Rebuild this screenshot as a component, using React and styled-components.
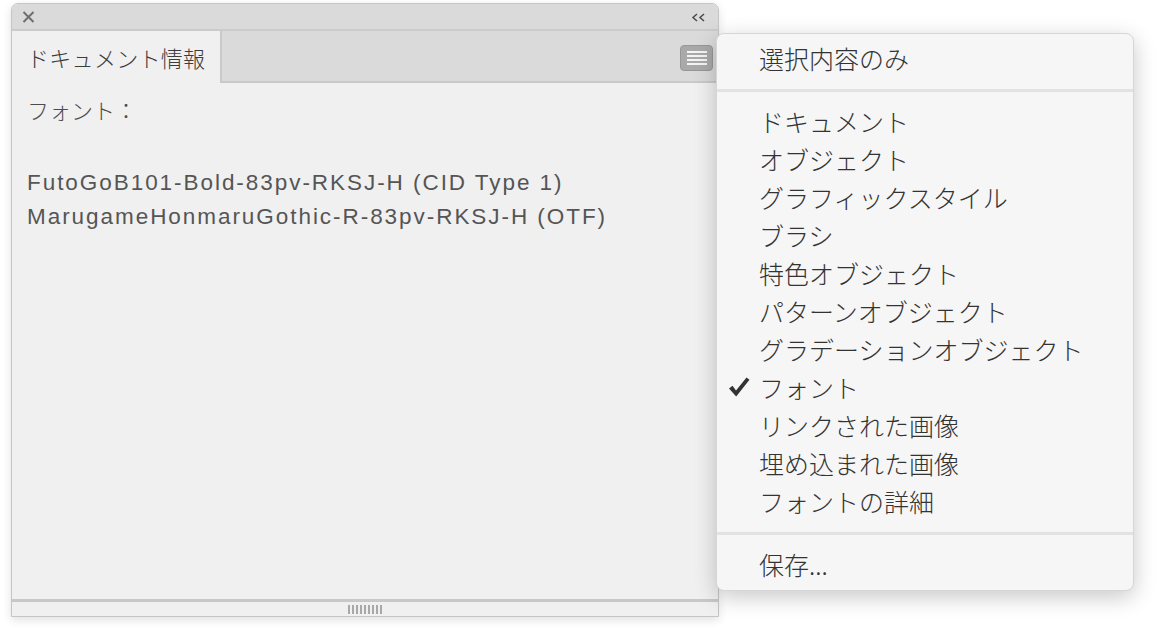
import React from 'react';
import styled, { createGlobalStyle } from 'styled-components';

const GlobalStyle = createGlobalStyle`
  html, body {
    margin: 0;
    padding: 0;
    background: #ffffff;
  }
  body {
    font-family: "Noto Sans CJK JP", "Noto Sans", sans-serif;
  }
`;

const menuItems = [
  { group: 'top', items: ['選択内容のみ'] },
  {
    group: 'types',
    items: [
      'ドキュメント',
      'オブジェクト',
      'グラフィックスタイル',
      'ブラシ',
      '特色オブジェクト',
      'パターンオブジェクト',
      'グラデーションオブジェクト',
      'フォント',
      'リンクされた画像',
      '埋め込まれた画像',
      'フォントの詳細',
    ],
  },
  { group: 'save', items: ['保存...'] },
];

const fonts = [
  'FutoGoB101-Bold-83pv-RKSJ-H (CID Type 1)',
  'MarugameHonmaruGothic-R-83pv-RKSJ-H (OTF)',
];

const App = () => {
  return (
    <>
      <GlobalStyle />
      <Stage>
        <Panel>
          <TitleBar>
            <IconButton aria-label="close">
              <svg width="13" height="12" viewBox="0 0 13 12">
                <path d="M1.5 1 L11.5 11 M11.5 1 L1.5 11" stroke="#6e6e6e" strokeWidth="2" fill="none" />
              </svg>
            </IconButton>
            <IconButton aria-label="collapse">
              <svg width="15" height="9" viewBox="0 0 15 9">
                <path d="M6 1 L2 4.5 L6 8 M13 1 L9 4.5 L13 8" stroke="#4a4a4a" strokeWidth="1.5" fill="none" />
              </svg>
            </IconButton>
          </TitleBar>

          <TabRow>
            <Tab>ドキュメント情報</Tab>
            <TabFiller>
              <MenuButton aria-label="panel menu">
                <span />
                <span />
                <span />
                <span />
              </MenuButton>
            </TabFiller>
          </TabRow>

          <Content>
            <Heading>フォント：</Heading>
            <Spacer />
            {fonts.map((f) => (
              <Line key={f}>{f}</Line>
            ))}
          </Content>

          <Footer>
            <Grip>
              {Array.from({ length: 9 }).map((_, i) => (
                <i key={i} />
              ))}
            </Grip>
          </Footer>
        </Panel>

        <Menu>
          {menuItems.map((g, gi) => (
            <MenuGroup key={g.group} $last={gi === menuItems.length - 1}>
              {g.items.map((label) => (
                <MenuItem key={label}>
                  <Check>
                    {label === 'フォント' && (
                      <svg width="22" height="20" viewBox="0 0 22 20">
                        <path
                          d="M1 11.5 L4.5 8.8 L8 13.5 L18.5 0.5 L21.5 2.8 L8.2 19.5 Z"
                          fill="#333"
                        />
                      </svg>
                    )}
                  </Check>
                  {label}
                </MenuItem>
              ))}
            </MenuGroup>
          ))}
        </Menu>
      </Stage>
    </>
  );
};

export default App;

const Stage = styled.div`
  position: relative;
  width: 1163px;
  height: 629px;
  padding: 3px 0 0 11px;
  box-sizing: border-box;
`;

const Panel = styled.div`
  width: 708px;
  height: 614px;
  box-sizing: border-box;
  display: flex;
  flex-direction: column;
  background: #f0f0f0;
  border: 1px solid #c5c5c5;
  border-radius: 7px 7px 0 0;
  overflow: hidden;
  box-shadow: 0 3px 10px rgba(0, 0, 0, 0.12);
`;

const TitleBar = styled.div`
  height: 25px;
  flex: none;
  display: flex;
  align-items: center;
  justify-content: space-between;
  padding: 0 12px 0 10px;
  background: #dadada;
  border-bottom: 2px solid #cbcbcb;
`;

const IconButton = styled.div`
  display: flex;
  align-items: center;
  justify-content: center;
  padding-top: 1px;
`;

const TabRow = styled.div`
  height: 52px;
  flex: none;
  display: flex;
`;

const Tab = styled.div`
  width: 193px;
  padding-left: 15px;
  display: flex;
  align-items: center;
  background: #f0f0f0;
  color: #3c3c3c;
  font-size: 22px;
  font-weight: 300;
  letter-spacing: 0.3px;
`;

const TabFiller = styled.div`
  flex: 1;
  display: flex;
  align-items: center;
  justify-content: flex-end;
  padding-right: 5px;
  background: #dadada;
  border-left: 2px solid #c9c9c9;
  border-bottom: 2px solid #c9c9c9;
`;

const MenuButton = styled.div`
  width: 33px;
  height: 26px;
  margin-top: 4px;
  box-sizing: border-box;
  display: flex;
  flex-direction: column;
  align-items: center;
  justify-content: center;
  gap: 2px;
  background: #a9a9a9;
  border: 1px solid #979797;
  border-radius: 4px;

  span {
    display: block;
    width: 20px;
    height: 2px;
    background: #f4f4f4;
  }
`;

const Content = styled.div`
  flex: 1;
  padding: 9px 15px;
  color: #4c4c4c;
`;

const Heading = styled.div`
  line-height: 34px;
  font-size: 22px;
  font-weight: 300;
`;

const Line = styled.div`
  line-height: 34px;
  white-space: nowrap;
  font-family: "Liberation Sans", "Noto Sans CJK JP", sans-serif;
  font-size: 22.5px;
  letter-spacing: 1.95px;
  color: #555555;
`;

const Spacer = styled.div`
  height: 40px;
`;

const Footer = styled.div`
  height: 14px;
  flex: none;
  display: flex;
  align-items: center;
  justify-content: center;
  border-top: 3px solid #c8c8c8;
`;

const Grip = styled.div`
  display: flex;
  gap: 2px;
  margin-top: 1px;

  i {
    display: block;
    width: 2px;
    height: 9px;
    background: #a8a8a8;
  }
`;

const Menu = styled.div`
  position: absolute;
  left: 716px;
  top: 33px;
  width: 418px;
  height: 558px;
  box-sizing: border-box;
  display: flex;
  flex-direction: column;
  background: #f6f6f6;
  border-radius: 8px;
  border: 1px solid #d6d6d6;
  box-shadow: 0 6px 22px rgba(0, 0, 0, 0.22);
  padding-top: 5px;
  overflow: hidden;
`;

const MenuGroup = styled.div`
  padding-bottom: ${(p) => (p.$last ? '0' : '12px')};
  margin-bottom: ${(p) => (p.$last ? '0' : '10px')};
  border-bottom: ${(p) => (p.$last ? 'none' : '3px solid #e2e2e2')};
`;

const MenuItem = styled.div`
  height: 38px;
  display: flex;
  align-items: center;
  color: #333333;
  font-size: 25px;
  font-weight: 300;
  white-space: nowrap;
`;

const Check = styled.span`
  width: 42px;
  box-sizing: border-box;
  padding-left: 11px;
  display: flex;
  align-items: center;
`;
